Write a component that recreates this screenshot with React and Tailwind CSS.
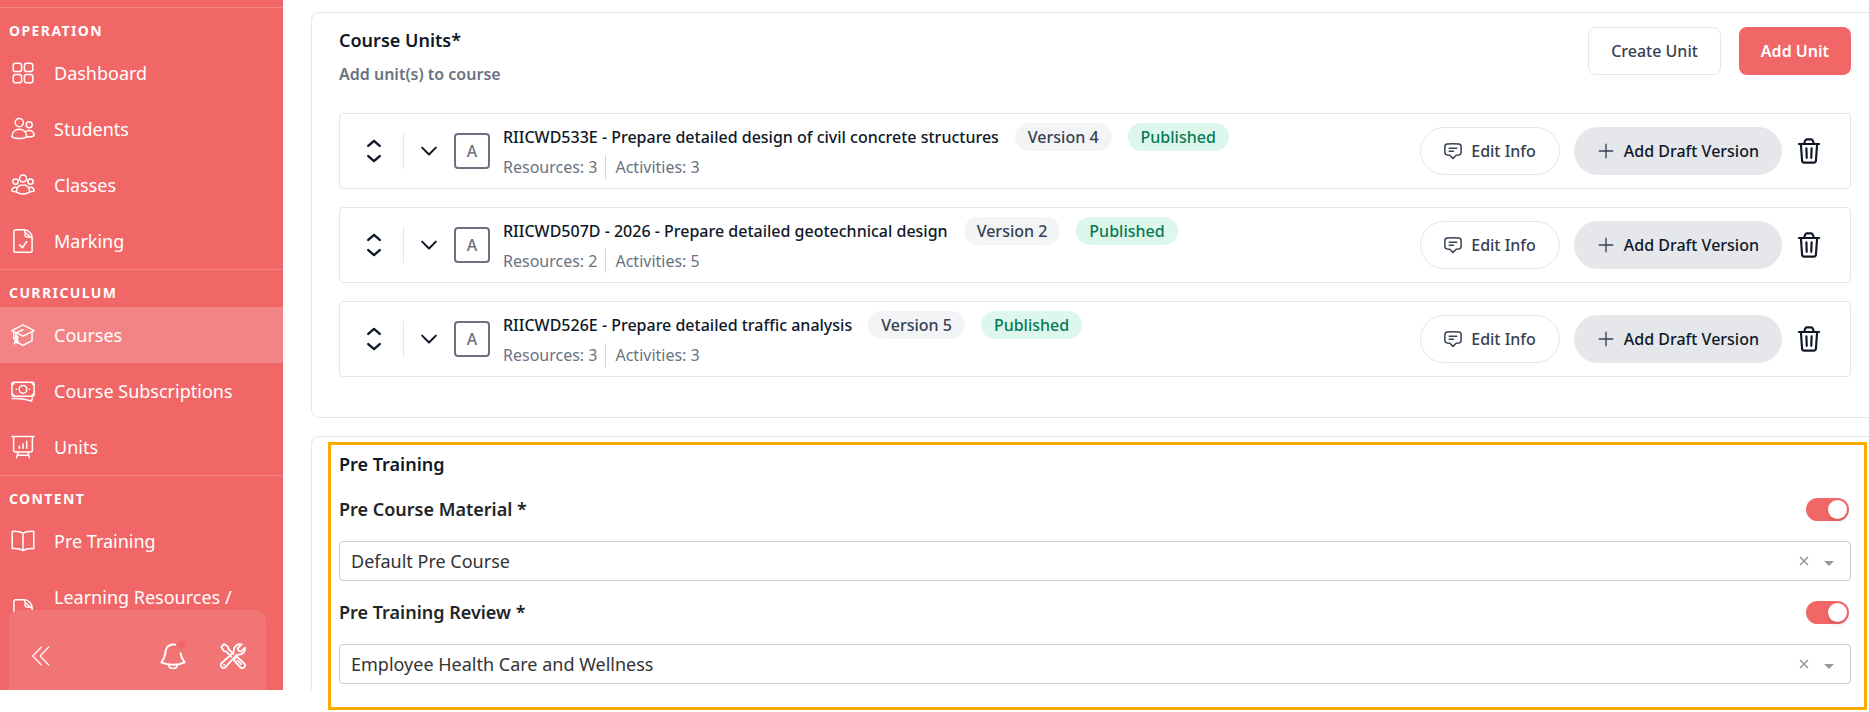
import React, { useState } from 'react';
import clsx from 'clsx';

const iconProps = {
  viewBox: '0 0 24 24',
  fill: 'none',
  stroke: 'currentColor',
  strokeWidth: 1.5,
  strokeLinecap: 'round',
  strokeLinejoin: 'round',
  'aria-hidden': true,
};

const DashboardIcon = (props) => (
  <svg {...iconProps} {...props}>
    <rect x="2.2" y="2.2" width="8.4" height="8.4" rx="2.4" />
    <rect x="13.4" y="2.2" width="8.4" height="8.4" rx="2.4" />
    <rect x="2.2" y="13.4" width="8.4" height="8.4" rx="2.4" />
    <rect x="13.4" y="13.4" width="8.4" height="8.4" rx="2.4" />
  </svg>
);

const StudentsIcon = (props) => (
  <svg {...iconProps} {...props}>
    <circle cx="8.3" cy="5.6" r="4.1" />
    <circle cx="18.2" cy="7.8" r="3" />
    <path d="M8.3 12.2c-4.2 0-7.2 3-7.4 7.6 2 1.2 4.6 1.8 7.4 1.8s5.4-.6 7.4-1.8c-.2-4.6-3.2-7.6-7.4-7.6z" />
    <path d="M14.2 15c1-.9 2.4-1.4 4-1.4 2.9 0 4.8 2 5 5-1.6 1-4.3 1.5-7.3 1.4" />
  </svg>
);

const ClassesIcon = (props) => (
  <svg {...iconProps} {...props}>
    <circle cx="12" cy="5.4" r="3.5" />
    <circle cx="4.5" cy="8.6" r="2.7" />
    <circle cx="19.5" cy="8.6" r="2.7" />
    <path d="M12 11.8c-3.7 0-6.3 2.4-6.8 7 1.9 1.5 4.2 2.2 6.8 2.2s4.9-.7 6.8-2.2c-.5-4.6-3.1-7-6.8-7z" />
    <path d="M6.4 14.6c-.6-.3-1.2-.4-1.900-.4-2 0-3.400 1.400-3.700 3.600 1.100.7 2.500 1 4.300 1" />
    <path d="M17.600 14.600c.6-.3 1.200-.4 1.900-.4 2 0 3.400 1.400 3.700 3.600-1.100.7-2.500 1-4.300 1" />
  </svg>
);

const FileIcon = ({ children, ...props }) => (
  <svg {...iconProps} {...props}>
    <path d="M13 .8H4.400A1.500 1.500 0 0 0 2.900 2.300v19.400a1.500 1.500 0 0 0 1.500 1.500h15.200a1.500 1.500 0 0 0 1.500-1.500V9.200C21.100 4.600 17.600.8 13 .8z" />
    <path d="M13 .8c1 .8 1.100 2 1.100 3.400v2.300c0 .8.600 1.400 1.400 1.400h2c1.500 0 2.800.2 3.600 1.300M14.300 3.500l4.500 4" />
    {children}
  </svg>
);

const MarkingIcon = (props) => (
  <FileIcon {...props}>
    <path d="M8.600 15.800l2.800 2.900 4.300-6.200" />
  </FileIcon>
);

const CoursesIcon = (props) => (
  <svg {...iconProps} {...props}>
    <path d="M12 1.800L.8 7.600l3.400 1.700L12 13.200l11.200-5.600z" />
    <path d="M21 9.300v8.300L12 22.300l-5.200-2.700" />
    <path d="M12 6.800L5 9.900v5.300" />
    <circle cx="5.600" cy="14.300" r="1.200" />
    <path d="M2.800 9v6.500l1.700 1.700-1.100 3.600M6.200 15.500l1 4.200M5.400 17v3" />
  </svg>
);

const SubscriptionsIcon = (props) => (
  <svg {...iconProps} {...props}>
    <rect x=".9" y="3.300" width="22.200" height="14" rx="1.600" />
    <circle cx="12" cy="10.300" r="3.900" />
    <path d="M.9 5.600a2.300 2.300 0 0 0 2.300-2.300M23.100 5.600a2.300 2.300 0 0 1-2.300-2.300M.9 15a2.300 2.300 0 0 1 2.300 2.300M23.100 15a2.300 2.300 0 0 0-2.300 2.300M5.300 10.300h.2M18.500 10.300h.2" />
    <path d="M1.300 19.600c6-.3 12.300.4 19.200 2.400l.8-2.700" />
  </svg>
);

const UnitsIcon = (props) => (
  <svg {...iconProps} {...props}>
    <path d="M.9 1.500h22.200M2.600 1.500v13.600a2 2 0 0 0 2 2h14.800a2 2 0 0 0 2-2V1.500" />
    <path d="M7 17.200l-1.400 5.600M17 17.200l1.400 5.600M6.200 20.200h11.600M8.300 13.300v-2M12 13.300V9M15.700 13.300V6.300" />
  </svg>
);

const BookIcon = (props) => (
  <svg {...iconProps} {...props}>
    <path d="M12 4.200C9.500 2.700 5.500 2.100 1.200 2.400v17.200c4.300-.3 8.300.3 10.800 2 2.500-1.700 6.500-2.300 10.800-2V2.400C18.500 2.100 14.500 2.700 12 4.200zM12 4.200v17.400" />
  </svg>
);

const CollapseIcon = (props) => (
  <svg {...iconProps} {...props} strokeWidth={1.1}>
    <path d="M12.500 3L3.800 12l8.700 9M19.800 3L11 12l8.800 9" />
  </svg>
);

const BellIcon = (props) => (
  <svg {...iconProps} {...props} strokeWidth={1.8}>
    <path d="M13.800 1.600C13.200 1.300 12.600 1.300 12 1.300c-3.800 0-6.700 2.900-6.900 6.600-.2 4-.6 5.700-3.800 10 3 1.500 6.700 2.100 10.700 2.100s7.700-.6 10.700-2.100c-2.600-3.500-3.400-5.400-3.700-8.400" />
    <path d="M8 20.200c.3 2.300 1.900 3.500 4 3.500s3.700-1.200 4-3.500" />
  </svg>
);

const ToolsIcon = (props) => (
  <svg {...iconProps} {...props} strokeWidth={1.7}>
    <path d="M1.200 3.700L3.600 1l3.700 2.200.6 2.400 4.500 4.500M1.200 3.700l2.300 3.600 2.300.6 4.600 4.600" />
    <path d="M13.600 14.600l2-2 6.700 6.200a2.500 2.500 0 0 1-3.500 3.600l-6-6.600M16.200 16.200l3.300 3.200" />
    <path d="M20 1.300l-3.500 3.400.6 2.500 2.500.6L23 4.400c.6 3.400-2 6.400-5.500 6.300-1.300 0-2 .1-2.800.9L5 22.200a2.500 2.500 0 0 1-3.600-3.500l10.500-9.600c.8-.8 1-1.500.9-2.700C12.900 3 16.200.4 20 1.300zM3.700 20.300h.1" />
  </svg>
);

const SortIcon = (props) => (
  <svg {...iconProps} {...props} strokeWidth={2.2}>
    <path d="M6.700 7.300L12 2.700l5.300 4.600M6.700 16.700l5.300 4.600 5.300-4.600" />
  </svg>
);

const ChevronIcon = (props) => (
  <svg {...iconProps} {...props} strokeWidth={2.2}>
    <path d="M4.500 8.300l7.500 7.500 7.500-7.500" />
  </svg>
);

const CommentIcon = (props) => (
  <svg {...iconProps} {...props} strokeWidth={2}>
    <path d="M1.200 6.500c0-2 1.200-3.500 3.200-3.700 5-.6 10.200-.6 15.200 0 2 .2 3.200 1.700 3.200 3.700v7.200c0 2-1.200 3.400-3.200 3.700l-3.400.3L12 21.800l-4.200-4.100-3.400-.3c-2-.3-3.200-1.700-3.200-3.700zM7 8.300h10M7 12.300h5.600" />
  </svg>
);

const PlusIcon = (props) => (
  <svg {...iconProps} {...props} strokeWidth={1.8}>
    <path d="M12 3v18M3 12h18" />
  </svg>
);

const TrashIcon = (props) => (
  <svg {...iconProps} {...props} strokeWidth={2}>
    <path d="M2.700 5.500h18.600M4.500 5.500l1.100 15.300c.1 1.200.9 2 2.100 2h8.600c1.200 0 2-.8 2.100-2l1.100-15.300" />
    <path d="M7.500 5.300l.9-2.600C8.700 1.800 9.200 1.300 10.100 1.300h3.800c.9 0 1.400.5 1.700 1.400l.9 2.600M9.600 9.500l.3 8.800M14.400 9.500l-.3 8.800" />
  </svg>
);

const navSections = [
  {
    title: 'Operation',
    items: [
      { label: 'Dashboard', icon: DashboardIcon },
      { label: 'Students', icon: StudentsIcon },
      { label: 'Classes', icon: ClassesIcon },
      { label: 'Marking', icon: MarkingIcon },
    ],
  },
  {
    title: 'Curriculum',
    items: [
      { label: 'Courses', icon: CoursesIcon, active: true },
      { label: 'Course Subscriptions', icon: SubscriptionsIcon },
      { label: 'Units', icon: UnitsIcon },
    ],
  },
  {
    title: 'Content',
    items: [
      { label: 'Pre Training', icon: BookIcon },
      { label: 'Learning Resources / Activities', icon: FileIcon },
    ],
  },
];

const units = [
  {
    id: 1,
    name: 'RIICWD533E - Prepare detailed design of civil concrete structures',
    version: 4,
    resources: 3,
    activities: 3,
  },
  {
    id: 2,
    name: 'RIICWD507D - 2026 - Prepare detailed geotechnical design',
    version: 2,
    resources: 2,
    activities: 5,
  },
  {
    id: 3,
    name: 'RIICWD526E - Prepare detailed traffic analysis',
    version: 5,
    resources: 3,
    activities: 3,
  },
];

function Sidebar() {
  return (
    <aside className="relative w-[283px] shrink-0 overflow-hidden bg-[#f16667] pt-[7px] text-white">
      <nav>
        {navSections.map((section) => (
          <div key={section.title} className="border-t border-white/20">
            <h2 className="flex h-[37px] items-center px-[9px] pt-2 text-sm font-bold uppercase tracking-widest">
              {section.title}
            </h2>
            {section.items.map(({ label, icon: Icon, active }) => (
              <a
                key={label}
                href="#"
                className={clsx(
                  'flex items-center gap-[18px] px-[9px] py-3.5 text-lg leading-7',
                  active && 'bg-white/20'
                )}
              >
                <span className="flex w-[27px] shrink-0 justify-center">
                  <Icon className="h-6 w-6" />
                </span>
                <span>{label}</span>
              </a>
            ))}
          </div>
        ))}
      </nav>

      {/* Footer actions */}
      <div className="absolute bottom-0 left-[9px] right-[17px] flex h-20 items-center justify-between rounded-t-[10px] bg-[#f27575] px-5 pt-3">
        <button type="button" aria-label="Collapse menu">
          <CollapseIcon className="h-6 w-6" />
        </button>
        <div className="flex items-center gap-[34px]">
          <button type="button" aria-label="Notifications" className="relative">
            <BellIcon className="h-[26px] w-[26px]" />
            <span className="absolute -top-0.5 right-0 h-2 w-2 rounded-full bg-[#f16667]" />
          </button>
          <button type="button" aria-label="Tools">
            <ToolsIcon className="h-[26px] w-[26px]" />
          </button>
        </div>
      </div>
    </aside>
  );
}

function UnitRow({ unit }) {
  return (
    <li className="flex h-[76px] items-center rounded border border-gray-200 pl-[21px] pr-7">
      <button type="button" aria-label="Reorder unit" className="text-gray-900">
        <SortIcon className="h-[26px] w-[26px]" />
      </button>
      <div className="ml-4 h-9 w-px bg-gray-200" />
      <button type="button" aria-label="Expand unit" className="ml-3.5 text-gray-900">
        <ChevronIcon className="h-[22px] w-[22px]" />
      </button>
      <div className="ml-3.5 flex h-9 w-9 items-center justify-center rounded border-2 border-gray-500 text-base font-medium text-gray-500">
        A
      </div>

      <div className="ml-[13px] min-w-0 flex-1">
        <div className="flex items-center gap-4">
          <h3 className="text-base font-medium text-gray-900">{unit.name}</h3>
          <span className="rounded-full bg-gray-100 px-[13px] py-0.5 text-base font-medium text-gray-700">
            Version {unit.version}
          </span>
          <span className="rounded-full bg-[#def7ec] px-[13px] py-0.5 text-base font-medium text-[#057a55]">
            Published
          </span>
        </div>
        <div className="mt-1 flex items-center text-base text-gray-500">
          <span>Resources: {unit.resources}</span>
          <span className="ml-2 border-l border-gray-300 pl-[9px]">
            Activities: {unit.activities}
          </span>
        </div>
      </div>

      <button
        type="button"
        className="flex h-12 items-center gap-[9px] rounded-full border border-gray-200 px-[23px] text-base font-medium text-gray-700"
      >
        <CommentIcon className="h-[18px] w-[18px]" />
        Edit Info
      </button>
      <button
        type="button"
        className="ml-3.5 flex h-12 items-center gap-[9px] rounded-full bg-gray-200 px-[23px] text-base font-medium text-gray-900"
      >
        <PlusIcon className="h-[18px] w-[18px] text-gray-700" />
        Add Draft Version
      </button>
      <button type="button" aria-label="Delete unit" className="ml-3.5 text-gray-900">
        <TrashIcon className="h-[26px] w-[26px]" />
      </button>
    </li>
  );
}

function TrainingField({ id, label, option }) {
  const [enabled, setEnabled] = useState(true);
  const [value, setValue] = useState(option);

  return (
    <div className="space-y-[18px]">
      <div className="flex h-7 items-center justify-between pr-0.5">
        <label htmlFor={id} className="text-lg font-semibold text-[#212529]">
          {label} *
        </label>
        <input
          type="checkbox"
          role="switch"
          aria-label={`Enable ${label}`}
          checked={enabled}
          onChange={(e) => setEnabled(e.target.checked)}
          className="flex h-[23px] w-[43px] appearance-none items-center rounded-full bg-gray-300 px-0.5 before:h-[19px] before:w-[19px] before:rounded-full before:bg-white before:shadow-md checked:justify-end checked:bg-[#f16667]"
        />
      </div>
      <div className="relative">
        <select
          id={id}
          value={value}
          onChange={(e) => setValue(e.target.value)}
          className="block h-10 w-full appearance-none rounded border border-[#ccc] bg-white px-[11px] text-lg text-[#333]"
        >
          <option value="" />
          <option value={option}>{option}</option>
        </select>
        <button
          type="button"
          aria-label={`Clear ${label}`}
          onClick={() => setValue('')}
          className="absolute inset-y-0 right-[42px] text-[#999]"
        >
          <svg viewBox="0 0 10 10" className="h-2.5 w-2.5" fill="none" stroke="currentColor" strokeWidth="1.6" aria-hidden="true">
            <path d="M1 1l8 8M9 1L1 9" />
          </svg>
        </button>
        <svg viewBox="0 0 10 5" className="pointer-events-none absolute right-[17px] top-5 h-[5px] w-2.5 fill-[#999]" aria-hidden="true">
          <path d="M0 0h10L5 5z" />
        </svg>
      </div>
    </div>
  );
}

function App() {
  return (
    <div className="min-h-screen bg-white pb-[21px] font-['Noto_Sans',sans-serif]">
      <div className="flex">
        <Sidebar />

        <main className="min-w-0 flex-1 pl-7 pt-3">
          {/* Course units */}
          <section className="rounded-l-lg border border-r-0 border-gray-200 pb-10 pl-[27px] pr-[18px] pt-3.5">
            <div className="mb-[27px] flex items-start justify-between">
              <div>
                <h2 className="text-lg font-semibold leading-[26px] text-gray-900">Course Units*</h2>
                <p className="mt-[9px] text-base font-semibold text-gray-500">Add unit(s) to course</p>
              </div>
              <div className="flex gap-[18px]">
                <button
                  type="button"
                  className="h-12 rounded-lg border border-gray-200 px-[22px] text-base font-medium text-gray-700"
                >
                  Create Unit
                </button>
                <button
                  type="button"
                  className="h-12 rounded-lg bg-[#f16667] px-[22px] text-base font-semibold text-white"
                >
                  Add Unit
                </button>
              </div>
            </div>
            <ul className="space-y-[18px]">
              {units.map((unit) => (
                <UnitRow key={unit.id} unit={unit} />
              ))}
            </ul>
          </section>

          {/* Pre training */}
          <section className="relative mt-[18px] rounded-tl-lg border-l border-t border-gray-200 pb-1.5 pl-[27px] pr-[18px] pt-[13px]">
            <div className="space-y-[17px]">
              <h2 className="text-lg font-semibold leading-7 text-gray-900">Pre Training</h2>
              <TrainingField id="pre-course" label="Pre Course Material" option="Default Pre Course" />
              <TrainingField
                id="pre-review"
                label="Pre Training Review"
                option="Employee Health Care and Wellness"
              />
            </div>
            {/* Highlight frame */}
            <div className="pointer-events-none absolute -bottom-5 left-4 right-0.5 top-[5px] border-3 border-[#ffaa00]" />
          </section>
        </main>
      </div>
    </div>
  );
}

export default App;
